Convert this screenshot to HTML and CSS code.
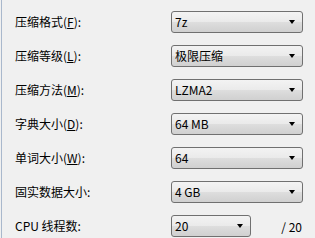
FILE: index.html
```html
<!DOCTYPE html>
<html lang="zh-CN">
<head>
    <meta charset="UTF-8">
    <title>压缩设置</title>
    <link rel="stylesheet" href="styles.css">
</head>
<body>
    <div class="panel">
        <div class="form">
            <label class="label">压缩格式(<u>F</u>):</label>
            <div class="field"><div class="combo"><span>7z</span><i class="arrow"></i></div></div>

            <label class="label">压缩等级(<u>L</u>):</label>
            <div class="field"><div class="combo"><span>极限压缩</span><i class="arrow"></i></div></div>

            <label class="label">压缩方法(<u>M</u>):</label>
            <div class="field"><div class="combo"><span>LZMA2</span><i class="arrow"></i></div></div>

            <label class="label">字典大小(<u>D</u>):</label>
            <div class="field"><div class="combo"><span>64 MB</span><i class="arrow"></i></div></div>

            <label class="label">单词大小(<u>W</u>):</label>
            <div class="field"><div class="combo"><span>64</span><i class="arrow"></i></div></div>

            <label class="label">固实数据大小:</label>
            <div class="field"><div class="combo"><span>4 GB</span><i class="arrow"></i></div></div>

            <label class="label">CPU 线程数:</label>
            <div class="field split">
                <div class="combo small"><span>20</span><i class="arrow"></i></div>
                <span class="total">/ 20</span>
            </div>
        </div>
    </div>
</body>
</html>
```

FILE: styles.css
```css
body { margin: 0; background: #f0f0f0; font-family: "Noto Sans CJK SC", "Liberation Sans", sans-serif; font-size: 12px; color: #000; }
.panel { margin-left: 1px; border-left: 1px solid #a9b8cc; height: 238px; box-sizing: border-box; padding: 11px 0 0 13px; }
.form { display: grid; grid-template-columns: 156px 132px; row-gap: 12px; }
.label { height: 22px; line-height: 22px; white-space: nowrap; }
.label u { text-decoration: underline; text-underline-offset: 1px; }
.field { height: 22px; }
.split { display: flex; justify-content: space-between; align-items: center; }
.combo { position: relative; box-sizing: border-box; height: 22px; border: 1px solid #707070; border-radius: 3px; padding-left: 3px; line-height: 20px; background: linear-gradient(#f3f3f3, #eaeaea 50%, #dedede 50%, #d0d0d0); }
.combo.small { width: 80px; }
.arrow { position: absolute; right: 7px; top: 8px; width: 0; height: 0; border-left: 3.5px solid transparent; border-right: 3.5px solid transparent; border-top: 4px solid #000; }
.total { padding-right: 1px; }
```
